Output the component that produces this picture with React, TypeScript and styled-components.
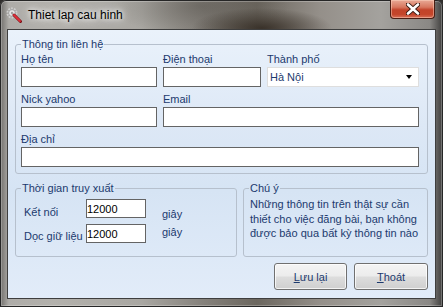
import styled, { createGlobalStyle } from 'styled-components';

const GlobalStyle = createGlobalStyle`
  html, body {
    margin: 0;
    padding: 0;
    background: #2f2d2b;
  }
  * {
    box-sizing: border-box;
  }
`;

const NAVY = '#1c3a6e';
const FONT = `'Liberation Sans', Arial, sans-serif`;

const Window = styled.div`
  width: 443px;
  height: 307px;
  display: flex;
  flex-direction: column;
  border-radius: 6px 6px 0 0;
  overflow: hidden;
  font-family: ${FONT};
  background:
    radial-gradient(ellipse 70px 20px at 262px 28px, rgba(52, 44, 36, 0.9), rgba(52, 44, 36, 0) 100%),
    radial-gradient(ellipse 90px 30px at 200px 6px, rgba(80, 76, 70, 0.45), rgba(80, 76, 70, 0) 100%),
    linear-gradient(90deg, #6e6c69 0%, #aeaca8 2%, #b3b1ac 12%, #a9a7a2 32%, #85817b 46%, #6c675f 58%, #948f89 72%, #a4a29e 86%, #8a8885 97%, #3c3b3a 100%);
  box-shadow: inset 0 0 0 1px #262626, inset 0 0 0 2px rgba(255, 255, 255, 0.25);
`;

const TitleBar = styled.div`
  height: 29px;
  flex: none;
  display: flex;
  align-items: center;
  padding-left: 6px;
`;

const TitleText = styled.span`
  margin-left: 6px;
  font-size: 12px;
  color: #000;
  text-shadow: 0 0 5px #fff, 0 0 9px rgba(255, 255, 255, 0.9), 0 0 14px rgba(255, 255, 255, 0.7);
`;

const CloseButton = styled.div`
  align-self: flex-start;
  margin-left: auto;
  margin-right: 8px;
  width: 45px;
  height: 19px;
  display: flex;
  align-items: center;
  justify-content: center;
  border: 1px solid #4a1e14;
  border-top: none;
  border-radius: 0 0 4px 4px;
  background: linear-gradient(180deg, #e9a996 0%, #d7775f 40%, #c2432a 55%, #c4452a 80%, #d8715a 100%);
  box-shadow: inset 0 0 0 1px rgba(255, 220, 200, 0.45);
`;

const Client = styled.div`
  flex: 1;
  margin: 0 7px 8px 7px;
  border: 1px solid #3e3e3e;
  background: linear-gradient(180deg, #eaf2fb 0%, #dde8f6 35%, #d6e4f4 60%, #e2ecf9 100%);
  padding: 8px 7px 0 7px;
  display: flex;
  flex-direction: column;
  color: ${NAVY};
  font-size: 11px;
`;

const GroupBox = styled.fieldset`
  margin: 0;
  min-width: 0;
  padding: 2px 7px 6px 5px;
  border: 1px solid #b6c0cd;
  border-radius: 3px;
`;

const Legend = styled.legend`
  padding: 0 1px;
  font-size: 11px;
  line-height: 13px;
  color: ${NAVY};
`;

const ContactGrid = styled.div`
  display: grid;
  grid-template-columns: 136px 98px 152px;
  column-gap: 6px;
  row-gap: 6px;
`;

const Field = styled.div<{ $cols?: string }>`
  display: flex;
  flex-direction: column;
  gap: 1px;
  grid-column: ${(p) => p.$cols ?? 'auto'};
`;

const Label = styled.span`
  line-height: 13px;
  white-space: nowrap;
`;

const TextBox = styled.input<{ $h?: number }>`
  width: 100%;
  height: ${(p) => p.$h ?? 20}px;
  border: 1px solid #646464;
  background: #fff;
  padding: 0;
  margin: 0;
  font-family: ${FONT};
  font-size: 11px;
  color: #000;
  outline: none;
`;

const Combo = styled.div`
  height: 20px;
  border: 1px solid #dedede;
  background: #fff;
  display: flex;
  align-items: center;
  padding: 0 6px 0 2px;
  color: ${NAVY};
`;

const ComboArrow = styled.span`
  margin-left: auto;
  width: 0;
  height: 0;
  border-left: 3.5px solid transparent;
  border-right: 3.5px solid transparent;
  border-top: 4px solid #000;
`;

const LowerRow = styled.div`
  margin-top: 8px;
  display: grid;
  grid-template-columns: 222px 1fr;
  column-gap: 6px;
`;

const TimeGrid = styled.div`
  display: grid;
  grid-template-columns: 62px 60px auto;
  grid-template-rows: 19px 19px;
  row-gap: 6px;
  padding: 2px 0 7px 3px;
`;

const TimeLabel = styled.span<{ $top: number; $gap?: number }>`
  align-self: start;
  line-height: 13px;
  margin-top: ${(p) => p.$top}px;
  margin-left: ${(p) => p.$gap ?? 0}px;
  white-space: nowrap;
`;

const Note = styled.p`
  margin: 0;
  padding-left: 1px;
  line-height: 14.5px;
  font-size: 11px;
`;

const ButtonRow = styled.div`
  margin-top: 6px;
  display: flex;
  justify-content: flex-end;
  gap: 7px;
`;

const Button = styled.button<{ $w: number }>`
  width: ${(p) => p.$w}px;
  height: 27px;
  border: 1px solid #707070;
  border-radius: 3px;
  background: linear-gradient(180deg, #f4f4f4 0%, #ececec 48%, #dddddd 52%, #cfcfcf 100%);
  box-shadow: inset 0 0 0 1px rgba(255, 255, 255, 0.75);
  font-family: ${FONT};
  font-size: 11px;
  color: ${NAVY};
  padding: 0;
`;

const Mnemonic = styled.span`
  text-decoration: underline;
`;

const AppIcon = () => (
  <svg width="16" height="16" viewBox="0 0 16 16">
    <circle cx="6" cy="6" r="4.3" fill="none" stroke="#cfcfcf" strokeWidth="2.4" strokeDasharray="1.6 1.1" />
    <circle cx="6" cy="6" r="3.4" fill="#e6e6e6" stroke="#909090" strokeWidth="0.8" />
    <circle cx="6" cy="6" r="1.2" fill="#a0a0a0" />
    <line x1="8" y1="8" x2="14.5" y2="14.5" stroke="#7a0f14" strokeWidth="3" strokeLinecap="round" />
    <line x1="8" y1="8" x2="14" y2="14" stroke="#e0303a" strokeWidth="1.8" strokeLinecap="round" />
  </svg>
);

const CloseGlyph = () => (
  <svg width="14" height="12" viewBox="0 0 14 12">
    <path d="M2 1.5 L12 10.5 M12 1.5 L2 10.5" stroke="#3a1a12" strokeWidth="4.4" strokeLinecap="round" />
    <path d="M2 1.5 L12 10.5 M12 1.5 L2 10.5" stroke="#fff" strokeWidth="2.6" strokeLinecap="round" />
  </svg>
);

const App = () => {
  return (
    <>
      <GlobalStyle />
      <Window>
        <TitleBar>
          <AppIcon />
          <TitleText>Thiet lap cau hinh</TitleText>
          <CloseButton>
            <CloseGlyph />
          </CloseButton>
        </TitleBar>
        <Client>
          <GroupBox>
            <Legend>Thông tin liên hệ</Legend>
            <ContactGrid>
              <Field>
                <Label>Họ tên</Label>
                <TextBox readOnly />
              </Field>
              <Field>
                <Label>Điện thoại</Label>
                <TextBox readOnly />
              </Field>
              <Field>
                <Label>Thành phố</Label>
                <Combo>
                  Hà Nội
                  <ComboArrow />
                </Combo>
              </Field>
              <Field>
                <Label>Nick yahoo</Label>
                <TextBox readOnly />
              </Field>
              <Field $cols="2 / 4">
                <Label>Email</Label>
                <TextBox readOnly />
              </Field>
              <Field $cols="1 / -1">
                <Label>Địa chỉ</Label>
                <TextBox readOnly />
              </Field>
            </ContactGrid>
          </GroupBox>

          <LowerRow>
            <GroupBox>
              <Legend>Thời gian truy xuất</Legend>
              <TimeGrid>
                <TimeLabel $top={7}>Kết nối</TimeLabel>
                <TextBox readOnly $h={19} defaultValue="12000" />
                <TimeLabel $top={9} $gap={16}>giây</TimeLabel>
                <TimeLabel $top={6}>Dọc giữ liệu</TimeLabel>
                <TextBox readOnly $h={19} defaultValue="12000" />
                <TimeLabel $top={2} $gap={16}>giây</TimeLabel>
              </TimeGrid>
            </GroupBox>
            <GroupBox>
              <Legend>Chú ý</Legend>
              <Note>
                Những thông tin trên thật sự cần
                <br />
                thiết cho việc đăng bài, bạn không
                <br />
                được bảo qua bất kỳ thông tin nào
              </Note>
            </GroupBox>
          </LowerRow>

          <ButtonRow>
            <Button $w={73}>
              <Mnemonic>L</Mnemonic>ưu lại
            </Button>
            <Button $w={74}>
              <Mnemonic>T</Mnemonic>hoát
            </Button>
          </ButtonRow>
        </Client>
      </Window>
    </>
  );
};

export default App;
